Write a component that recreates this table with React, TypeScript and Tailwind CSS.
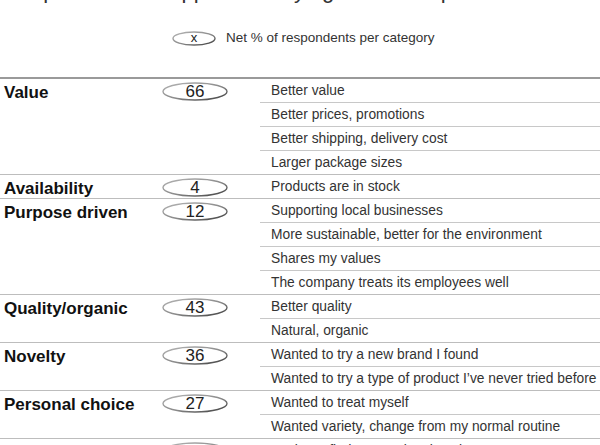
import React from 'react'

type Category = { label: string; value: string; items: string[] }

const categories: Category[] = [
  {
    label: 'Value',
    value: '66',
    items: ['Better value', 'Better prices, promotions', 'Better shipping, delivery cost', 'Larger package sizes'],
  },
  { label: 'Availability', value: '4', items: ['Products are in stock'] },
  {
    label: 'Purpose driven',
    value: '12',
    items: [
      'Supporting local businesses',
      'More sustainable, better for the environment',
      'Shares my values',
      'The company treats its employees well',
    ],
  },
  { label: 'Quality/organic', value: '43', items: ['Better quality', 'Natural, organic'] },
  {
    label: 'Novelty',
    value: '36',
    items: ['Wanted to try a new brand I found', 'Wanted to try a type of product I\u2019ve never tried before'],
  },
  {
    label: 'Personal choice',
    value: '27',
    items: ['Wanted to treat myself', 'Wanted variety, change from my normal routine'],
  },
  { label: 'Convenience', value: '8', items: ['Easier to find, convenient location'] },
]

function Oval({ w, h, children, size }: { w: number; h: number; children: React.ReactNode; size: string }) {
  const id = `g${w}${h}`
  return (
    <div className="relative shrink-0" style={{ width: w, height: h }}>
      <svg width={w} height={h} className="absolute inset-0">
        <defs>
          <linearGradient id={id} x1="0" y1="0" x2="1" y2="1">
            <stop offset="0" stopColor="#b5b5b5" />
            <stop offset="0.55" stopColor="#8a8a8a" />
            <stop offset="1" stopColor="#3a3a3a" />
          </linearGradient>
        </defs>
        <ellipse cx={w / 2} cy={h / 2} rx={w / 2 - 1} ry={h / 2 - 1} fill="white" stroke={`url(#${id})`} strokeWidth="1.4" />
      </svg>
      <div className={`relative flex h-full items-center justify-center text-[#222] ${size}`}>{children}</div>
    </div>
  )
}

export default function App() {
  return (
    <div className="w-[600px] h-[445px] overflow-hidden bg-white font-['Liberation_Sans',Arial,sans-serif]">
      {/* title, only its descenders show at the top edge */}
      <div className="h-[5px] overflow-hidden">
        <div className="-mt-[22px] pl-[20px] text-[22px] leading-[26px] text-[#333] whitespace-nowrap">
          Top reasons shoppers are trying a new shop
        </div>
      </div>

      {/* legend */}
      <div className="mt-[23px] flex items-center pl-[172px]">
        <Oval w={44} h={15} size="text-[13px]">x</Oval>
        <span className="ml-[10px] text-[13.5px] text-[#333]">Net % of respondents per category</span>
      </div>

      {/* table */}
      <div className="mt-[29px] border-t-2 border-[#9a9a9a]">
        {categories.map((c) => (
          <div key={c.label} className="flex border-b border-[#bdbdbd]">
            <div className="w-[160px] shrink-0 pl-1 pt-[4px] text-[17px] leading-[19px] font-bold text-[#111]">{c.label}</div>
            <div className="w-[100px] shrink-0 pl-[2px] pt-[3px]">
              <Oval w={66} h={19} size="text-[17px]">{c.value}</Oval>
            </div>
            <div className="flex-1">
              {c.items.map((it, i) => (
                <div
                  key={it}
                  className={`h-[23px] pl-[11px] pt-[1px] text-[13.8px] leading-[22px] text-[#333] whitespace-nowrap ${
                    i < c.items.length - 1 ? 'h-[24px] border-b border-[#c8c8c8]' : ''
                  }`}
                >
                  {it}
                </div>
              ))}
            </div>
          </div>
        ))}
      </div>
    </div>
  )
}
